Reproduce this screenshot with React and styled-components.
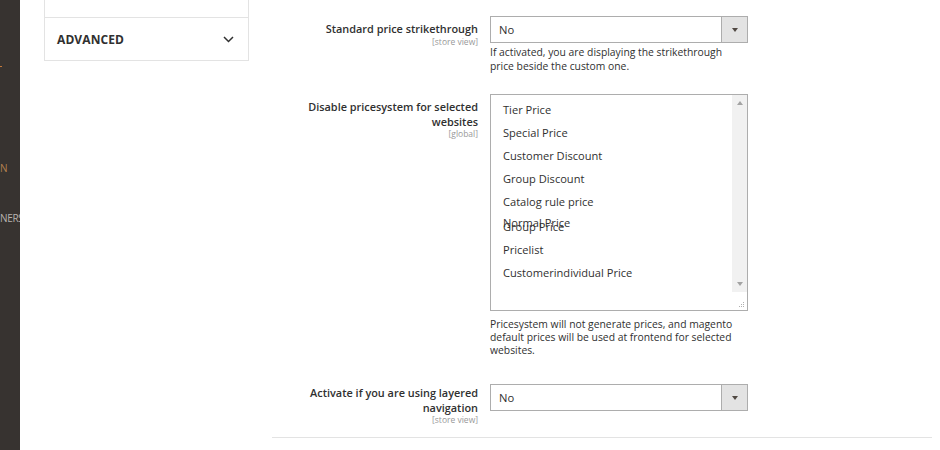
import React from "react";
import styled, { createGlobalStyle } from "styled-components";

const GlobalStyle = createGlobalStyle`
  html, body {
    margin: 0;
    padding: 0;
    background: #fff;
  }
  body {
    font-family: "Open Sans", "Liberation Sans", sans-serif;
    color: #303030;
    overflow: hidden;
  }
`;

const Page = styled.div`
  display: flex;
  width: 940px;
  height: 450px;
  overflow: hidden;
`;

const Sidebar = styled.div`
  width: 20px;
  flex-shrink: 0;
  background: #373330;
  position: relative;
  overflow: hidden;
`;

const SideMark = styled.div`
  position: absolute;
  left: 0;
  top: ${(p) => p.$top}px;
  font-size: 10px;
  line-height: 12px;
  color: ${(p) => p.$color};
  white-space: nowrap;
  letter-spacing: -0.3px;
`;

const SideDot = styled.div`
  position: absolute;
  left: 0;
  top: 66px;
  width: 2px;
  height: 1px;
  background: #c4793a;
`;

const LeftCol = styled.div`
  width: 205px;
  flex-shrink: 0;
  margin-left: 24px;
`;

const Panel = styled.div`
  border: 1px solid #e3e3e3;
  border-top: none;
`;

const PanelItem = styled.div`
  height: ${(p) => p.$h}px;
  display: flex;
  align-items: center;
  justify-content: space-between;
  padding: 0 14px 0 12px;
  & + & {
    border-top: 1px solid #e3e3e3;
  }
`;

const PanelTitle = styled.span`
  font-size: 12px;
  font-weight: 700;
  color: #303030;
  letter-spacing: 0.1px;
`;

const Content = styled.div`
  width: 660px;
  margin-left: 23px;
  display: flex;
  flex-direction: column;
  padding-top: 16px;
`;

const Row = styled.div`
  display: flex;
  gap: 12px;
  margin-bottom: ${(p) => p.$mb}px;
`;

const LabelCol = styled.div`
  width: 206px;
  flex-shrink: 0;
  text-align: right;
  padding-top: ${(p) => p.$pt}px;
`;

const Label = styled.div`
  font-size: 10.9px;
  font-weight: 600;
  line-height: 14.5px;
  color: #303030;
`;

const Scope = styled.div`
  font-size: 8.5px;
  line-height: 10px;
  color: #999;
`;

const Control = styled.div`
  width: 258px;
`;

const Select = styled.div`
  height: 27px;
  box-sizing: border-box;
  border: 1px solid #adadad;
  display: flex;
  align-items: stretch;
  background: #fff;
`;

const SelectValue = styled.div`
  flex: 1;
  padding-left: 8px;
  font-size: 11.2px;
  display: flex;
  align-items: center;
  color: #303030;
`;

const SelectArrow = styled.div`
  width: 25px;
  border-left: 1px solid #adadad;
  background: #e3e3e3;
  display: flex;
  align-items: center;
  justify-content: center;
  &::after {
    content: "";
    border-left: 3px solid transparent;
    border-right: 3px solid transparent;
    border-top: 4px solid #514943;
  }
`;

const Note = styled.div`
  margin-top: ${(p) => p.$mt}px;
  font-size: 10.35px;
  line-height: ${(p) => p.$lh}px;
  color: #303030;
`;

const MultiBox = styled.div`
  height: 217px;
  box-sizing: border-box;
  border: 1px solid #adadad;
  display: flex;
  background: #fff;
`;

const OptionList = styled.div`
  flex: 1;
  padding: 3px 0 0 12px;
`;

const Option = styled.div`
  position: relative;
  height: ${(p) => p.$h || 23}px;
  line-height: 23px;
  padding-top: ${(p) => p.$pt || 0}px;
  box-sizing: border-box;
  font-size: 11.1px;
  color: #303030;
`;

const Ghost = styled.span`
  position: absolute;
  left: 0;
  top: -2px;
  color: #303030;
`;

const ScrollCol = styled.div`
  width: 15px;
  display: flex;
  flex-direction: column;
`;

const Track = styled.div`
  flex: 1;
  background: #f1f1f1;
  display: flex;
  flex-direction: column;
  justify-content: space-between;
  align-items: center;
  padding: 6px 0;
`;

const Tri = styled.div`
  border-left: 3px solid transparent;
  border-right: 3px solid transparent;
  ${(p) =>
    p.$up
      ? "border-bottom: 4px solid #a3a3a3;"
      : "border-top: 4px solid #a3a3a3;"}
`;

const Grip = styled.div`
  height: 16px;
  display: flex;
  align-items: flex-end;
  justify-content: flex-end;
  padding: 0 2px 2px 0;
`;

const Separator = styled.div`
  height: 1px;
  background: #e3e3e3;
  margin-top: 12px;
`;

const options = [
  "Tier Price",
  "Special Price",
  "Customer Discount",
  "Group Discount",
  "Catalog rule price",
];

const App = () => (
  <>
    <GlobalStyle />
    <Page>
      <Sidebar>
        <SideDot />
        <SideMark $top={162} $color="#b5804f">N</SideMark>
        <SideMark $top={212} $color="#b8b2ad">NERS</SideMark>
      </Sidebar>
      <LeftCol>
        <Panel>
          <PanelItem $h={17} />
          <PanelItem $h={42}>
            <PanelTitle>ADVANCED</PanelTitle>
            <svg width="11" height="7" viewBox="0 0 11 7">
              <polyline
                points="1,1 5.5,5.5 10,1"
                fill="none"
                stroke="#303030"
                strokeWidth="1.5"
              />
            </svg>
          </PanelItem>
        </Panel>
      </LeftCol>
      <Content>
        <Row $mb={21}>
          <LabelCol $pt={6}>
            <Label>Standard price strikethrough</Label>
            <Scope>[store view]</Scope>
          </LabelCol>
          <Control>
            <Select>
              <SelectValue>No</SelectValue>
              <SelectArrow />
            </Select>
            <Note $mt={2} $lh={14}>
              If activated, you are displaying the strikethrough price beside
              the custom one.
            </Note>
          </Control>
        </Row>
        <Row $mb={27}>
          <LabelCol $pt={6}>
            <Label>Disable pricesystem for selected websites</Label>
            <Scope>[global]</Scope>
          </LabelCol>
          <Control>
            <MultiBox>
              <OptionList>
                {options.map((o) => (
                  <Option key={o}>{o}</Option>
                ))}
                <Option $h={25} $pt={2}>
                  <Ghost>Normal Price</Ghost>
                  Group Price
                </Option>
                <Option>Pricelist</Option>
                <Option>Customerindividual Price</Option>
              </OptionList>
              <ScrollCol>
                <Track>
                  <Tri $up />
                  <Tri />
                </Track>
                <Grip>
                  <svg width="7" height="7" viewBox="0 0 7 7">
                    <g fill="#b0b0b0">
                      <rect x="5" y="1" width="1" height="1" />
                      <rect x="3" y="3" width="1" height="1" />
                      <rect x="5" y="3" width="1" height="1" />
                      <rect x="1" y="5" width="1" height="1" />
                      <rect x="3" y="5" width="1" height="1" />
                      <rect x="5" y="5" width="1" height="1" />
                    </g>
                  </svg>
                </Grip>
              </ScrollCol>
            </MultiBox>
            <Note $mt={7} $lh={13}>
              Pricesystem will not generate prices, and magento default prices
              will be used at frontend for selected websites.
            </Note>
          </Control>
        </Row>
        <Row $mb={0}>
          <LabelCol $pt={2}>
            <Label>Activate if you are using layered navigation</Label>
            <Scope>[store view]</Scope>
          </LabelCol>
          <Control>
            <Select>
              <SelectValue>No</SelectValue>
              <SelectArrow />
            </Select>
          </Control>
        </Row>
        <Separator />
      </Content>
    </Page>
  </>
);

export default App;
